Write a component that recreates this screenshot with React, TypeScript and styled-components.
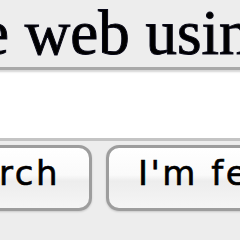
import React from "react";
import styled, { createGlobalStyle } from "styled-components";

const Global = createGlobalStyle`
  html, body { margin: 0; padding: 0; background: #ededed; }
  body { overflow: hidden; }
`;

const Page = styled.div`
  width: 240px;
  height: 240px;
  overflow: hidden;
  background: #ededed;
  display: flex;
  flex-direction: column;
`;

const Title = styled.div`
  box-sizing: border-box;
  height: 67px;
  padding-top: 2px;
  margin-left: -68px;
  font-family: "Liberation Serif", "Times New Roman", serif;
  font-size: 63px;
  line-height: 63px;
  color: #000;
  -webkit-text-stroke: 1px #0a0a1a;
  white-space: nowrap;
`;

const SearchBox = styled.input`
  box-sizing: border-box;
  display: block;
  width: 300px;
  margin-left: -30px;
  height: 74px;
  border: none;
  border-top: 3px solid #a9a9a9;
  border-bottom: 3px solid #c4c4c4;
  box-shadow: inset 0 2px 2px #d6d6d6;
  background: #fff;
  outline: none;
  padding: 0;
`;

const ButtonRow = styled.div`
  display: grid;
  grid-template-columns: 92px 1fr;
  column-gap: 14px;
  margin-top: 4px;
`;

const Cell = styled.div<{ $align: "start" | "end" }>`
  display: flex;
  justify-content: ${(p) => (p.$align === "end" ? "flex-end" : "flex-start")};
  min-width: 0;
`;

const Button = styled.button`
  flex-shrink: 0;
  box-sizing: border-box;
  height: 66px;
  padding: 0 29px 10px 29px;
  border: 3px solid #9d9d9d;
  border-radius: 13px;
  background: linear-gradient(#ffffff 0%, #fafafa 45%, #ededed 55%, #f5f5f5 100%);
  box-shadow: 0 1px 2px rgba(0, 0, 0, 0.15);
  font-family: "DejaVu Sans", "Verdana", sans-serif;
  font-size: 34px;
  letter-spacing: 2.5px;
  line-height: 40px;
  color: #000;
  -webkit-text-stroke: 0.6px #000;
  white-space: nowrap;
`;

export default function App() {
  return (
    <Page>
      <Global />
      <Title>the web using Google</Title>
      <SearchBox type="text" />
      <ButtonRow>
        <Cell $align="end">
          <Button>Google Search</Button>
        </Cell>
        <Cell $align="start">
          <Button>I'm feeling lucky</Button>
        </Cell>
      </ButtonRow>
    </Page>
  );
}
